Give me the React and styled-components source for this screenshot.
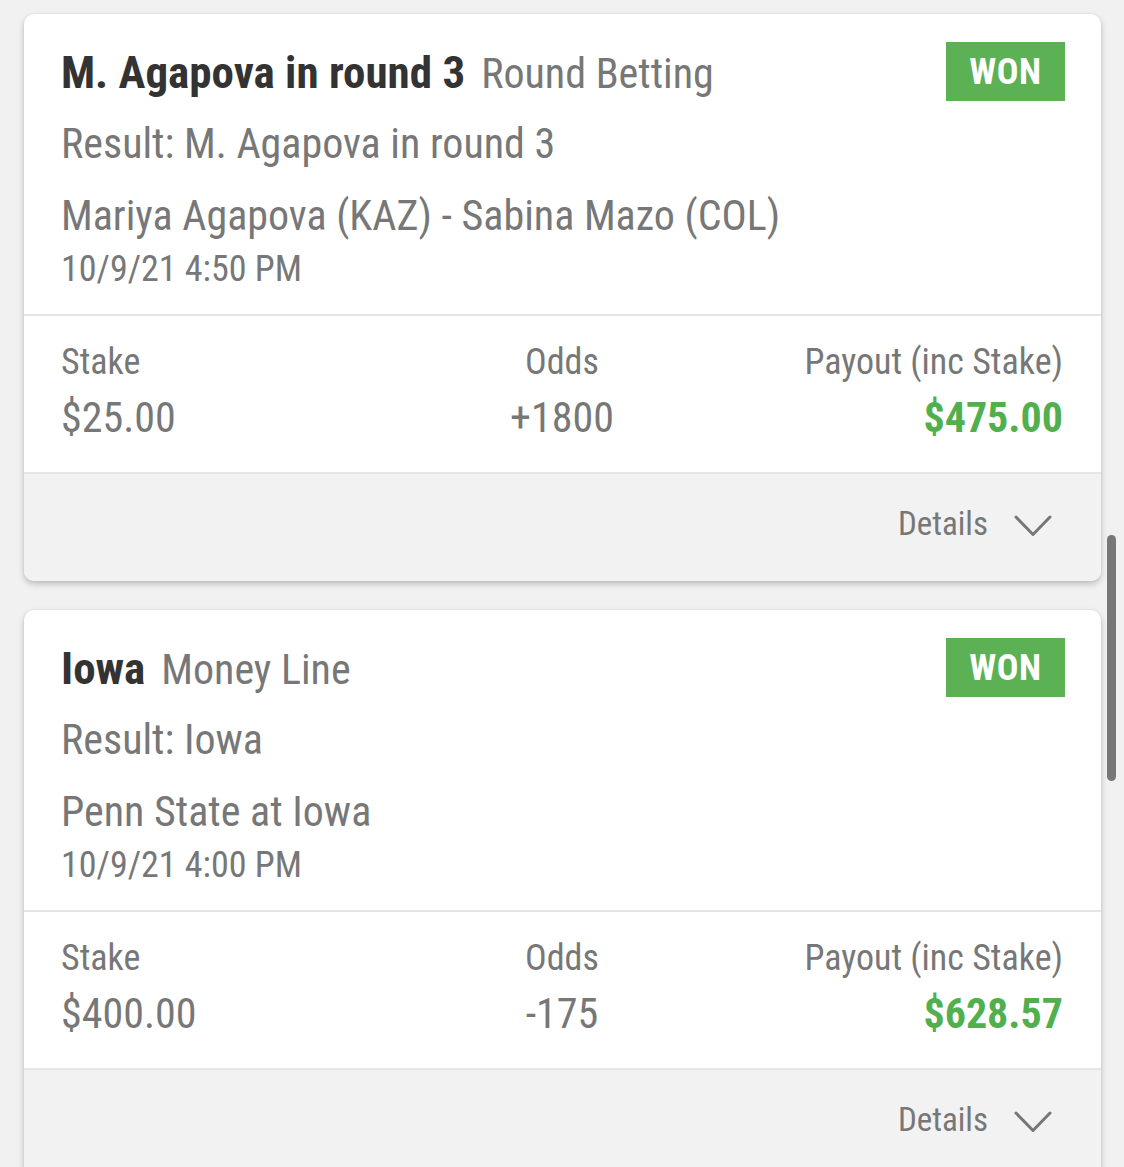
import React from 'react';
import styled, { createGlobalStyle } from 'styled-components';

const fontStack = `"Roboto Condensed", "Liberation Sans Narrow", "DejaVu Sans Condensed", Roboto, sans-serif`;

const colors = {
  page: '#f1f1f1',
  card: '#ffffff',
  footer: '#f2f2f2',
  rule: '#e5e5e5',
  text: '#777777',
  title: '#333333',
  green: '#5bb153',
  payout: '#52af4e',
};

const GlobalStyle = createGlobalStyle`
  html, body {
    margin: 0;
    padding: 0;
    height: 100%;
    overflow: hidden;
    background: ${colors.page};
    font-family: ${fontStack};
  }
`;

const Page = styled.div`
  display: flex;
  flex-direction: column;
  gap: 29px;
  padding: 14px 23px 0 24px;
  height: 1167px;
  box-sizing: border-box;
  overflow: hidden;
`;

const Card = styled.div`
  flex-shrink: 0;
  background: ${colors.card};
  border-radius: 10px;
  box-shadow: 0 3px 6px rgba(0, 0, 0, 0.22), 0 0 2px rgba(0, 0, 0, 0.08);
  overflow: hidden;
`;

const Header = styled.div`
  display: flex;
  align-items: flex-start;
  justify-content: space-between;
  padding: 28px 36px 24px 37px;
  border-bottom: 2px solid ${colors.rule};
`;

const Info = styled.div`
  display: flex;
  flex-direction: column;
  color: ${colors.text};
`;

const TitleRow = styled.div`
  display: flex;
  align-items: baseline;
  gap: 16px;
  margin-top: 5px;
  font-size: 45px;
  line-height: 52px;
  white-space: nowrap;
`;

const Selection = styled.span`
  font-weight: bold;
  color: ${colors.title};
`;

const Market = styled.span`
  font-size: 42px;
  line-height: 46px;
  color: ${colors.text};
`;

const Line = styled.div`
  font-size: ${p => p.size}px;
  line-height: ${p => p.size + 6}px;
  margin-top: ${p => p.gap}px;
  white-space: nowrap;
`;

const Badge = styled.div`
  width: 119px;
  height: 59px;
  display: flex;
  align-items: center;
  justify-content: center;
  background: ${colors.green};
  color: #fff;
  font-weight: bold;
  font-size: 36px;
  letter-spacing: 0.5px;
`;

const Stats = styled.div`
  display: grid;
  grid-template-columns: 1fr 1fr 1fr;
  padding: 25px 38px 30px 37px;
  border-bottom: 2px solid ${colors.rule};
  color: ${colors.text};
`;

const Stat = styled.div`
  display: flex;
  flex-direction: column;
  gap: 11px;
  text-align: ${p => p.align};
`;

const StatLabel = styled.div`
  font-size: 36px;
  line-height: 42px;
`;

const StatValue = styled.div`
  font-size: 42px;
  line-height: 48px;
  color: ${p => (p.win ? colors.payout : colors.text)};
  font-weight: ${p => (p.win ? 'bold' : 'normal')};
`;

const Footer = styled.div`
  display: flex;
  justify-content: flex-end;
  align-items: center;
  gap: 26px;
  padding: 30px 49px 37px 37px;
  background: ${colors.footer};
  color: ${colors.text};
  font-size: 33px;
  line-height: 40px;
`;

const Chevron = styled.svg`
  width: 38px;
  height: 22px;
  margin-top: 4px;
`;

const Scrollbar = styled.div`
  position: fixed;
  top: 535px;
  right: 8px;
  width: 9px;
  height: 246px;
  border-radius: 5px;
  background: #777;
`;

const bets = [
  {
    selection: 'M. Agapova in round 3',
    market: 'Round Betting',
    result: 'Result: M. Agapova in round 3',
    event: 'Mariya Agapova (KAZ) - Sabina Mazo (COL)',
    date: '10/9/21 4:50 PM',
    stake: '$25.00',
    odds: '+1800',
    payout: '$475.00',
  },
  {
    selection: 'Iowa',
    market: 'Money Line',
    result: 'Result: Iowa',
    event: 'Penn State at Iowa',
    date: '10/9/21 4:00 PM',
    stake: '$400.00',
    odds: '-175',
    payout: '$628.57',
  },
];

const BetCard = ({ bet }) => (
  <Card>
    <Header>
      <Info>
        <TitleRow>
          <Selection>{bet.selection}</Selection>
          <Market>{bet.market}</Market>
        </TitleRow>
        <Line size={42} gap={21}>{bet.result}</Line>
        <Line size={42} gap={24}>{bet.event}</Line>
        <Line size={36} gap={8}>{bet.date}</Line>
      </Info>
      <Badge>WON</Badge>
    </Header>
    <Stats>
      <Stat align="left">
        <StatLabel>Stake</StatLabel>
        <StatValue>{bet.stake}</StatValue>
      </Stat>
      <Stat align="center">
        <StatLabel>Odds</StatLabel>
        <StatValue>{bet.odds}</StatValue>
      </Stat>
      <Stat align="right">
        <StatLabel>Payout (inc Stake)</StatLabel>
        <StatValue win>{bet.payout}</StatValue>
      </Stat>
    </Stats>
    <Footer>
      <span>Details</span>
      <Chevron viewBox="0 0 38 22" fill="none">
        <path d="M2 2 L19 19.5 L36 2" stroke="#777" strokeWidth="3" strokeLinecap="round" strokeLinejoin="round" />
      </Chevron>
    </Footer>
  </Card>
);

export default function App() {
  return (
    <>
      <GlobalStyle />
      <Page>
        {bets.map(bet => (
          <BetCard key={bet.selection} bet={bet} />
        ))}
      </Page>
      <Scrollbar />
    </>
  );
}
